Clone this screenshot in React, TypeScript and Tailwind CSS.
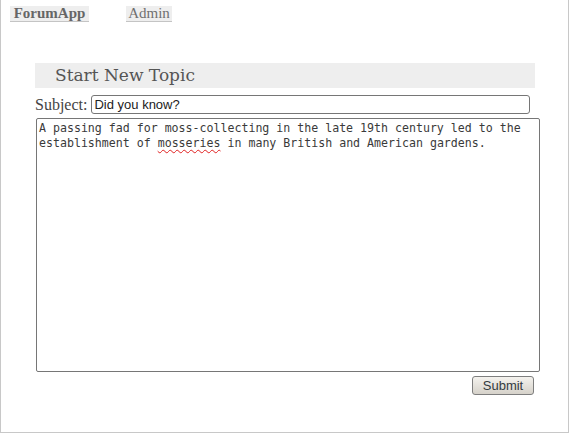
import React from 'react';

const serif = { fontFamily: '"Liberation Serif", "Times New Roman", serif' };

export default function App() {
  return (
    <div className="w-[569px] h-[433px] border-l border-r border-b border-[#c8c8c8] bg-white">
      {/* top nav */}
      <div className="flex items-start pt-[6px] pl-[9px] font-['Liberation_Serif',serif] text-[15px]">
        <div className="h-[16px] w-[79px] flex items-center justify-center bg-[#eeeeee] border-b border-[#c4c4c4] font-bold text-[#666666] leading-none">
          ForumApp
        </div>
        <div className="ml-[37px] h-[16px] w-[46px] flex items-center justify-center bg-[#eeeeee] border-b border-[#c4c4c4] text-[#707070] leading-none">
          Admin
        </div>
      </div>

      <div className="ml-[34px] mt-[41px] w-[500px]">
        <div className="h-[25px] bg-[#eeeeee] pl-[20px] flex items-center font-['DejaVu_Serif',serif] text-[17px] text-[#555555]">
          Start New Topic
        </div>

        <div className="mt-[7px] flex items-center">
          <span className="text-[16px] text-[#444444] leading-none" style={serif}>
            Subject:
          </span>
          <div className="ml-[4px] w-[439px] h-[19px] border border-[#767676] rounded-[3px] pl-[2px] flex items-center font-['Liberation_Sans',Arial,sans-serif] text-[13px] text-[#222222]">
            Did you know?
          </div>
        </div>

        <div className="mt-[4px] ml-[1px] w-[504px] h-[254px] border border-[#767676] rounded-[2px] px-[2px] pt-[2px] font-['DejaVu_Sans_Mono',monospace] text-[11.6px] leading-[15px] text-[#3a3a3a]">
          A passing fad for moss-collecting in the late 19th century led to the establishment of <span className="underline decoration-wavy decoration-[#e02020] decoration-1 underline-offset-2">mosseries</span> in many British and American gardens.
        </div>

        <div className="mt-[4px] mr-[1px] flex justify-end">
          <button className="w-[62px] h-[19px] border border-[#7e7e7e] rounded-[3px] bg-gradient-to-b from-[#f4f2ee] to-[#d6d2ca] font-['Liberation_Sans',Arial,sans-serif] text-[13px] text-[#333a40] leading-none">
            Submit
          </button>
        </div>
      </div>
    </div>
  );
}
